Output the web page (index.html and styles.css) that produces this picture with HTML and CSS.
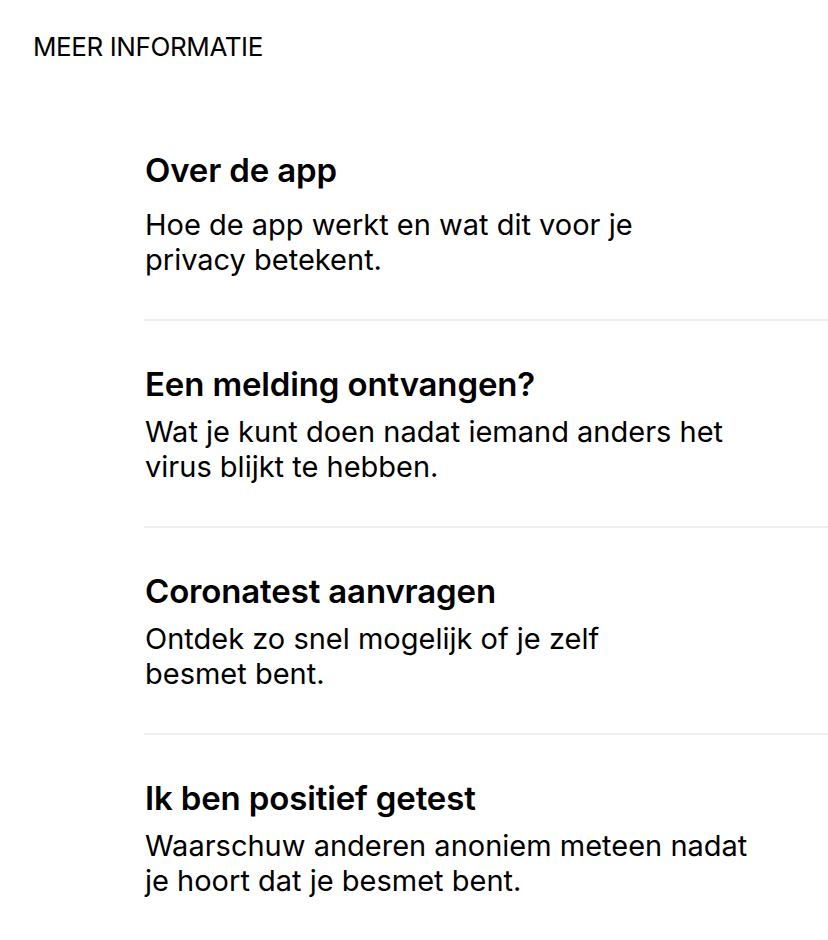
FILE: index.html
```html
<!DOCTYPE html>
<html lang="nl">
<head>
<meta charset="utf-8">
<title>Meer informatie</title>
<link rel="stylesheet" href="styles.css">
</head>
<body>
<main class="screen">
  <h2 class="section-title">MEER INFORMATIE</h2>
  <ul class="info-list">
    <li class="info-item info-item--first">
      <h3 class="info-title">Over de app</h3>
      <p class="info-desc">Hoe de app werkt en wat dit voor je<br>privacy betekent.</p>
    </li>
    <li class="info-item">
      <h3 class="info-title">Een melding ontvangen?</h3>
      <p class="info-desc">Wat je kunt doen nadat iemand anders het<br>virus blijkt te hebben.</p>
    </li>
    <li class="info-item">
      <h3 class="info-title">Coronatest aanvragen</h3>
      <p class="info-desc">Ontdek zo snel mogelijk of je zelf<br>besmet bent.</p>
    </li>
    <li class="info-item info-item--last">
      <h3 class="info-title">Ik ben positief getest</h3>
      <p class="info-desc">Waarschuw anderen anoniem meteen nadat<br>je hoort dat je besmet bent.</p>
    </li>
  </ul>
</main>
</body>
</html>
```
FILE: styles.css
```css
* { box-sizing: border-box; }
html, body {
  margin: 0;
  padding: 0;
  background: #ffffff;
}
body {
  font-family: Inter, "Noto Sans", "Liberation Sans", sans-serif;
  color: #000000;
  width: 828px;
  height: 940px;
  overflow: hidden;
}
.screen {
  display: flex;
  flex-direction: column;
}
.section-title {
  margin: 31px 0 0 33px;
  font-size: 26px;
  line-height: 32px;
  font-weight: 400;
  letter-spacing: -0.4px;
}
.info-list {
  list-style: none;
  margin: 44px 0 0 0;
  padding: 0 0 0 144px;
  display: flex;
  flex-direction: column;
}
.info-item {
  display: flex;
  flex-direction: column;
  gap: 10px;
  padding: 43px 0 42px 1px;
  border-bottom: 2px solid #efefef;
}
.info-item--first {
  gap: 17px;
}
.info-item--last {
  border-bottom: none;
}
.info-title {
  margin: 0;
  font-size: 33px;
  line-height: 40px;
  font-weight: 600;
  letter-spacing: -0.15px;
}
.info-desc {
  margin: 0;
  font-size: 29px;
  line-height: 35px;
  font-weight: 400;
}
```
